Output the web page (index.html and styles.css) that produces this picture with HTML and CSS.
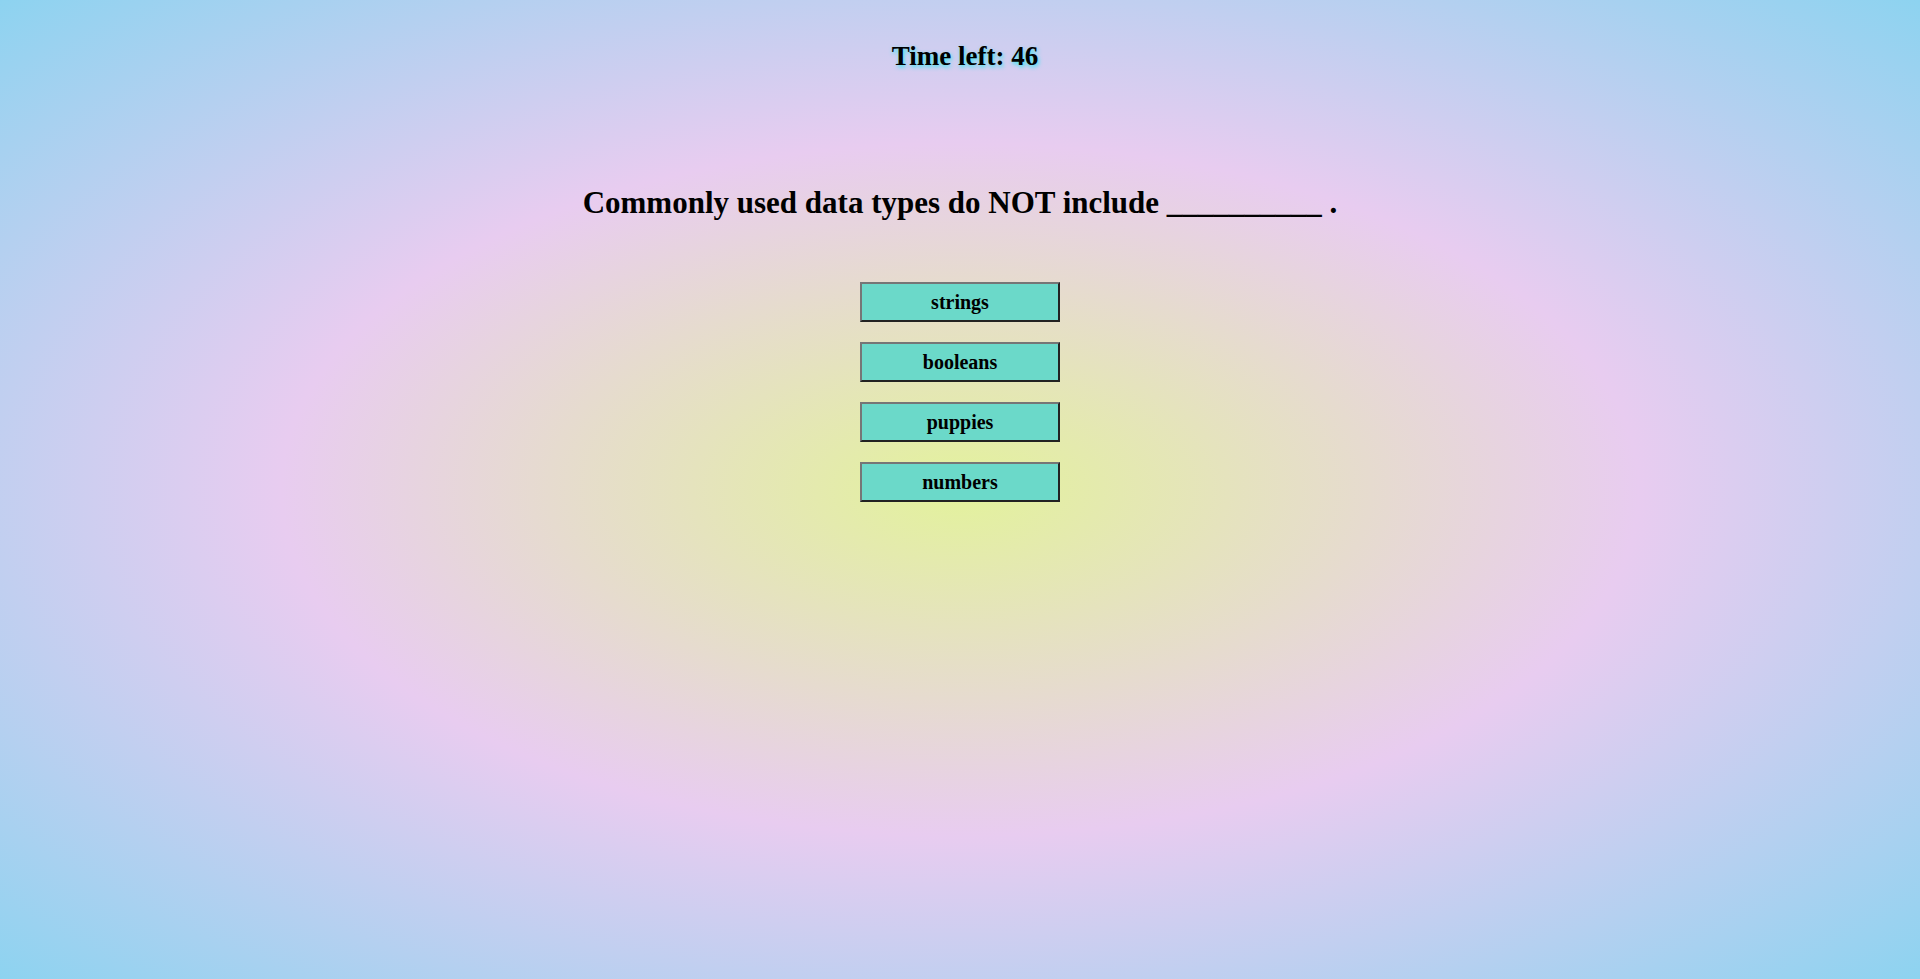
FILE: index.html
```html
<!DOCTYPE html>
<html lang="en">
<head>
<meta charset="utf-8">
<title>Code Quiz</title>
<link rel="stylesheet" href="styles.css">
</head>
<body>
<header class="timer">Time left: 46</header>
<main class="quiz">
  <h2 class="question">Commonly used data types do NOT include __________ .</h2>
  <div class="choices">
    <button class="choice">strings</button>
    <button class="choice">booleans</button>
    <button class="choice">puppies</button>
    <button class="choice">numbers</button>
  </div>
</main>
</body>
</html>
```

FILE: styles.css
```css
html, body {
  margin: 0;
  padding: 0;
}
body {
  min-height: 100vh;
  font-family: "Liberation Serif", "Times New Roman", serif;
  font-weight: bold;
  color: #000;
  background: radial-gradient(ellipse farthest-corner at 50% 50%, #e3f29c 0%, #e8ccf0 50%, #8dd3f0 100%);
  display: flex;
  flex-direction: column;
  align-items: center;
}
.timer {
  margin-top: 41px;
  margin-left: 10px;
  font-size: 27px;
  line-height: 30px;
  text-shadow: 1px 2px 4px #2ee6f0;
}
.quiz {
  display: flex;
  flex-direction: column;
  align-items: center;
}
.question {
  margin: 113px 0 0;
  font-size: 31px;
  line-height: 38px;
}
.choices {
  margin-top: 60px;
  display: flex;
  flex-direction: column;
  gap: 20px;
}
.choice {
  width: 200px;
  height: 40px;
  padding: 0;
  font-family: "Liberation Serif", "Times New Roman", serif;
  font-weight: bold;
  font-size: 20px;
  color: #000;
  background: #6bd9c9;
  border-width: 2px;
  border-style: solid;
  border-color: #767676 #222 #222 #767676;
}
```
